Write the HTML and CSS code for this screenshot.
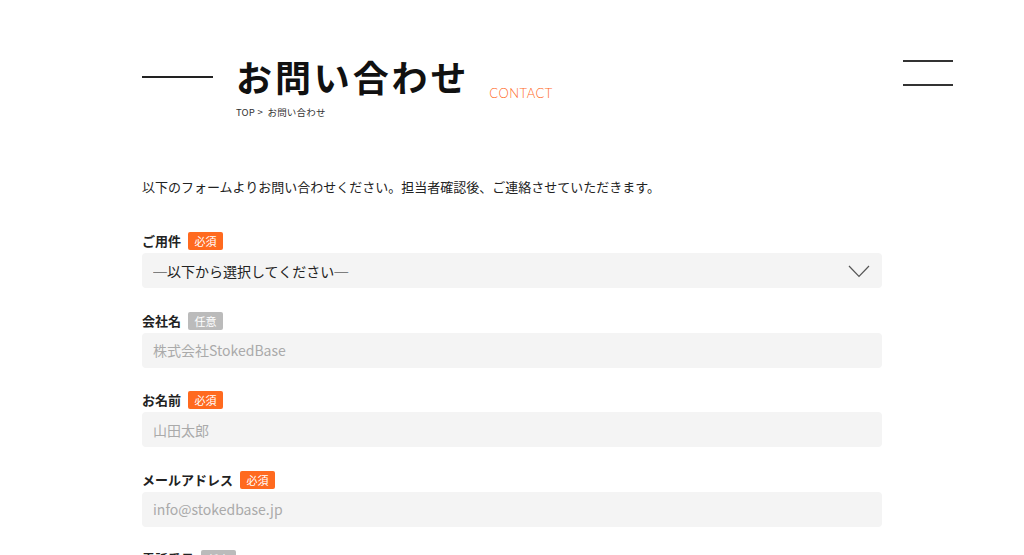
FILE: index.html
```html
<!DOCTYPE html>
<html lang="ja">
<head>
  <meta charset="UTF-8">
  <meta name="viewport" content="width=device-width, initial-scale=1.0">
  <title>お問い合わせ</title>
  <link rel="stylesheet" href="styles.css">
</head>
<body>
  <!-- Menu button -->
  <button class="menu-btn" aria-label="menu">
    <span></span>
    <span></span>
  </button>

  <div class="container">
    <header class="page-header">
      <div class="header-line"></div>
      <div class="header-text">
        <div class="title-row">
          <h1>お問い合わせ</h1>
          <span class="title-en">CONTACT</span>
        </div>
        <p class="breadcrumb">TOP &gt;&nbsp;&nbsp;お問い合わせ</p>
      </div>
    </header>

    <p class="intro">以下のフォームよりお問い合わせください。担当者確認後、ご連絡させていただきます。</p>

    <form class="contact-form">
      <div class="field">
        <label class="field-label">ご用件 <span class="badge required">必須</span></label>
        <div class="select-wrap">
          <select class="input">
            <option>─以下から選択してください─</option>
          </select>
          <svg class="chevron" width="22" height="13" viewBox="0 0 22 13">
            <polyline points="1,1 11,11.5 21,1" fill="none" stroke="#555" stroke-width="1.2"/>
          </svg>
        </div>
      </div>

      <div class="field">
        <label class="field-label">会社名 <span class="badge optional">任意</span></label>
        <input class="input" type="text" placeholder="株式会社StokedBase">
      </div>

      <div class="field">
        <label class="field-label">お名前 <span class="badge required">必須</span></label>
        <input class="input" type="text" placeholder="山田太郎">
      </div>

      <div class="field">
        <label class="field-label">メールアドレス <span class="badge required">必須</span></label>
        <input class="input" type="email" placeholder="info@stokedbase.jp">
      </div>

      <div class="field">
        <label class="field-label">電話番号 <span class="badge optional">任意</span></label>
        <input class="input" type="tel" placeholder="03-0000-0000">
      </div>
    </form>
  </div>
</body>
</html>
```

FILE: styles.css
```css
body {
  font-family: "Noto Sans CJK JP", "Noto Sans", sans-serif;
  margin: 0;
  padding: 0;
  background-color: #fff;
  color: #222;
}
.container {
  width: 740px;
  margin: 0 auto;
  padding-top: 58px;
}
.menu-btn {
  position: absolute;
  top: 56px;
  left: 903px;
  width: 50px;
  height: 34px;
  padding: 0;
  border: none;
  background: none;
  display: flex;
  flex-direction: column;
  justify-content: space-between;
  padding: 4px 0;
  cursor: pointer;
}
.menu-btn span {
  display: block;
  height: 2px;
  background: #333;
}
.page-header {
  display: flex;
  align-items: flex-start;
}
.header-line {
  width: 71px;
  height: 2px;
  background: #222;
  margin-top: 18px;
}
.header-text {
  margin-left: 23px;
}
.title-row {
  display: flex;
  align-items: flex-end;
}
h1 {
  margin: 0;
  font-size: 36px;
  line-height: 1;
  font-weight: 700;
  letter-spacing: 0.08em;
  color: #111;
}
.title-en {
  margin-left: 20px;
  margin-bottom: -7px;
  font-family: "Lato", sans-serif;
  font-size: 13px;
  font-weight: 300;
  letter-spacing: 0.04em;
  color: #ff6a1f;
}
.breadcrumb {
  margin: 14px 0 0;
  font-size: 9.5px;
  line-height: 1;
  letter-spacing: 0.02em;
  color: #333;
}
.intro {
  margin: 59px 0 0;
  font-size: 13px;
  line-height: 1.5;
}
.contact-form {
  margin-top: 36px;
}
.field {
  margin-bottom: 23.5px;
}
.field-label {
  display: flex;
  align-items: center;
  gap: 7px;
  font-size: 13px;
  font-weight: 700;
  line-height: 18px;
  margin-bottom: 3px;
}
.badge {
  display: inline-block;
  width: 35px;
  height: 18px;
  line-height: 18px;
  text-align: center;
  font-size: 11px;
  font-weight: 400;
  color: #fff;
  border-radius: 2px;
}
.required {
  background: #ff6a1f;
}
.optional {
  background: #bbb;
}
.input {
  display: block;
  box-sizing: border-box;
  width: 100%;
  height: 35px;
  padding: 0 11px;
  border: none;
  border-radius: 4px;
  background: #f4f4f4;
  font-family: inherit;
  font-size: 14px;
  color: #222;
  outline: none;
}
.input::placeholder {
  color: #aaa;
}
.select-wrap {
  position: relative;
}
select.input {
  appearance: none;
  -webkit-appearance: none;
}
.chevron {
  position: absolute;
  right: 12px;
  top: 12px;
  pointer-events: none;
}
```
